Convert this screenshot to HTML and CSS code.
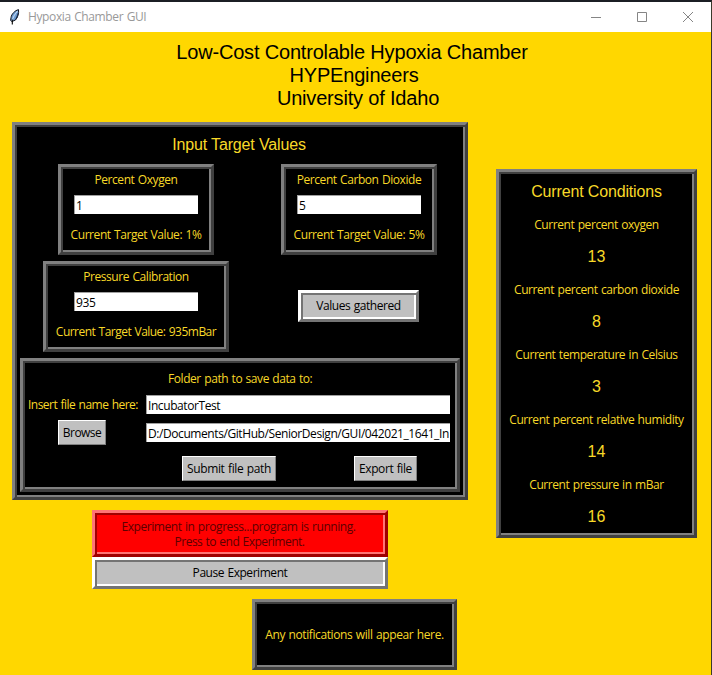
FILE: index.html
```html
<!DOCTYPE html>
<html lang="en">
<head>
<meta charset="utf-8">
<title>Hypoxia Chamber GUI</title>
<link rel="stylesheet" href="styles.css">
</head>
<body>
<div class="window">
  <header class="titlebar">
    <svg class="feather" width="12" height="16" viewBox="0 0 12 16">
      <path d="M9.5 .6C6 1.500 2.500 5 2 8.500L1.600 11.500L3 12.500L6.500 11C9 8 10 4.500 9.500 .6Z" fill="#6d9bd0" stroke="#14161f" stroke-width="1"/>
      <path d="M8.500 2C6 5 4 8 3 12" stroke="#d8e8fa" stroke-width=".9" fill="none"/>
      <path d="M6.500 10.500L8.800 7M7.500 9L9.300 4" stroke="#1c2c4a" stroke-width="1" fill="none"/>
      <path d="M3.300 10.500V15.500" stroke="#000" stroke-width="1.100" fill="none"/>
    </svg>
    <span class="caption">Hypoxia Chamber GUI</span>
    <div class="controls">
      <svg width="10" height="10" viewBox="0 0 10 10"><path d="M0 5.500H10"/></svg>
      <svg width="10" height="10" viewBox="0 0 10 10"><path d="M.5 .5H9.500V9.500H.5Z"/></svg>
      <svg width="10" height="10" viewBox="0 0 10 10"><path d="M0 0L10 10M10 0L0 10"/></svg>
    </div>
  </header>

  <h1 class="heading">
    <span class="line first">Low-Cost Controlable Hypoxia Chamber</span>
    <span class="line second">HYPEngineers</span>
    <span class="line third">University of Idaho</span>
  </h1>

  <main class="content">
    <div class="left">
      <section class="groove inputs">
        <h2 class="title">Input Target Values</h2>
        <div class="targets">
          <div class="groove target oxygen">
            <label>Percent Oxygen</label>
            <input class="entry" value="1">
            <label>Current Target Value: 1%</label>
          </div>
          <div class="groove target">
            <label>Percent Carbon Dioxide</label>
            <input class="entry" value="5">
            <label>Current Target Value: 5%</label>
          </div>
        </div>
        <div class="targets second-row">
          <div class="groove target pressure">
            <label>Pressure Calibration</label>
            <input class="entry" value="935">
            <label class="tight">Current Target Value: 935mBar</label>
          </div>
          <button class="groove light gathered">Values gathered</button>
        </div>
        <div class="groove folder">
          <label class="folder-label">Folder path to save data to:</label>
          <div class="file-grid">
            <label class="tight">Insert file name here:</label>
            <input class="entry" value="IncubatorTest">
            <button class="raised browse">Browse</button>
            <input class="entry path" value="D:/Documents/GitHub/SeniorDesign/GUI/042021_1641_IncubatorTest">
          </div>
          <div class="file-actions">
            <button class="raised submit">Submit file path</button>
            <button class="raised export">Export file</button>
          </div>
        </div>
      </section>
      <button class="groove red"><span class="row">Experiment in progress...program is running.</span><span class="row second tight">Press to end Experiment.</span></button>
      <button class="groove light pause">Pause Experiment</button>
      <section class="groove notice">Any notifications will appear here.</section>
    </div>

    <section class="groove conditions">
      <h2 class="title">Current Conditions</h2>
      <p class="name">Current percent oxygen</p><p class="value">13</p>
      <p class="name">Current percent carbon dioxide</p><p class="value">8</p>
      <p class="name">Current temperature in Celsius</p><p class="value">3</p>
      <p class="name">Current percent relative humidity</p><p class="value">14</p>
      <p class="name">Current pressure in mBar</p><p class="value">16</p>
    </section>
  </main>
</div>
</body>
</html>
```
FILE: styles.css
```css
* { box-sizing: border-box; }

body {
  margin: 0;
  background: #ffd700;
  color: #f8d928;
  font: 12px/16px "Open Sans", "Noto Sans", sans-serif;
  letter-spacing: -0.43px;
  word-spacing: 0.7px;
}

.window {
  width: 712px;
  height: 675px;
  overflow: hidden;
  border-top: 2px solid #1b1e24;
  border-right: 1px solid #3a3a2c;
}

.titlebar {
  display: flex;
  align-items: center;
  height: 30px;
  padding-left: 9px;
  background: #fff;
  color: #999;
}

.feather { margin-top: -1px; }

.caption {
  margin-left: 7px;
  letter-spacing: -0.38px;
}

.controls {
  display: flex;
  gap: 36px;
  margin-left: auto;
  margin-right: 18px;
}

.controls svg { fill: none; stroke: #858585; stroke-width: 1; }

.heading, .title {
  margin: 0;
  font-family: "Liberation Sans", Arial, sans-serif;
  font-weight: 400;
  text-align: center;
  word-spacing: 0;
}

.heading {
  height: 90px;
  padding-top: 9px;
  color: #000;
  font-size: 20px;
  line-height: 23px;
  letter-spacing: -0.18px;
}

.line { display: block; width: 704px; }
.line.second { width: 708px; }
.line.third { width: 716px; }

.title {
  font-size: 16px;
  line-height: 20px;
  letter-spacing: -0.15px;
}

.content {
  display: flex;
  align-items: flex-start;
  gap: 28px;
  padding-left: 12px;
}

.left { width: 456px; }

.groove {
  --lit: #808080;
  --shade: #404040;
  --face: #000;
  border: 3px solid;
  border-color: var(--lit) var(--shade) var(--shade) var(--lit);
  background: var(--face);
  box-shadow: inset 2px 2px 0 var(--shade), inset -2px -2px 0 var(--lit);
}

button {
  display: block;
  margin: 0;
  padding: 0;
  border-radius: 0;
  color: #000;
  font: inherit;
  letter-spacing: -0.45px;
  word-spacing: 0.7px;
}

.light {
  --lit: #fff;
  --shade: #747474;
  --face: #c0c0c0;
}

.red {
  --lit: #ff7474;
  --shade: #a00000;
  --face: #f00;
  width: 296px;
  height: 47px;
  margin: 10px 0 0 80px;
  padding-right: 3px;
  color: #5c0000;
  line-height: 15px;
  letter-spacing: -0.43px;
}

.row { display: block; height: 15px; font-size: 12px; line-height: 15px; }
.row.second { padding-left: 2px; }

.pause { width: 296px; height: 32px; margin-left: 80px; }

.inputs { height: 378px; padding: 10px 5px 0; }
.inputs .title { width: 438px; }

.targets {
  display: flex;
  gap: 67px;
  margin: 9px 0 0 38px;
}

.target {
  display: flex;
  flex-direction: column;
  align-items: center;
  width: 156px;
  height: 91px;
  padding-top: 5px;
}

.entry {
  display: block;
  width: 124px;
  height: 19px;
  padding: 0 1px;
  border: 0 solid #a0a0a0;
  border-width: 1px 0 0 1px;
  border-radius: 0;
  outline: 0;
  background: #fff;
  color: #000;
  font: inherit;
  letter-spacing: -0.42px;
}

.target .entry { margin: 7px 0 13px; }

.second-row { gap: 69px; margin: 6px 0 0 23px; }

.pressure { width: 186px; }

.tight { letter-spacing: -0.52px; }

.gathered { width: 121px; height: 32px; margin-top: 29px; }

.folder {
  width: 440px;
  height: 134px;
  margin-top: 6px;
  padding-top: 10px;
}

.folder-label { display: block; padding-left: 145px; }

.file-grid {
  display: grid;
  grid-template-columns: 118px 304px;
  align-items: center;
  row-gap: 6px;
  margin: 8px 0 0 5px;
}

.file-grid .entry { width: 304px; }

.raised {
  height: 25px;
  border: 1px solid;
  border-color: #fff #808080 #808080 #fff;
  background: #c0c0c0;
}

.browse { width: 48px; margin-left: 30px; letter-spacing: -0.55px; }

.file-actions {
  display: flex;
  gap: 78px;
  margin: 11px 0 0 159px;
}

.submit { width: 94px; letter-spacing: -0.36px; }
.export { width: 63px; letter-spacing: -0.4px; }

.notice {
  display: flex;
  align-items: center;
  justify-content: center;
  width: 205px;
  height: 71px;
  margin: 10px 0 0 240px;
  letter-spacing: -0.39px;
}

.conditions {
  width: 201px;
  height: 369px;
  margin-top: 47px;
  padding-top: 10px;
  text-align: center;
}

.name, .value { margin: 0; }

.name {
  height: 33px;
  padding-top: 15px;
}

.value {
  height: 32px;
  padding-top: 12px;
  font: 16px/20px "Liberation Sans", Arial, sans-serif;
  letter-spacing: 0;
}
```
